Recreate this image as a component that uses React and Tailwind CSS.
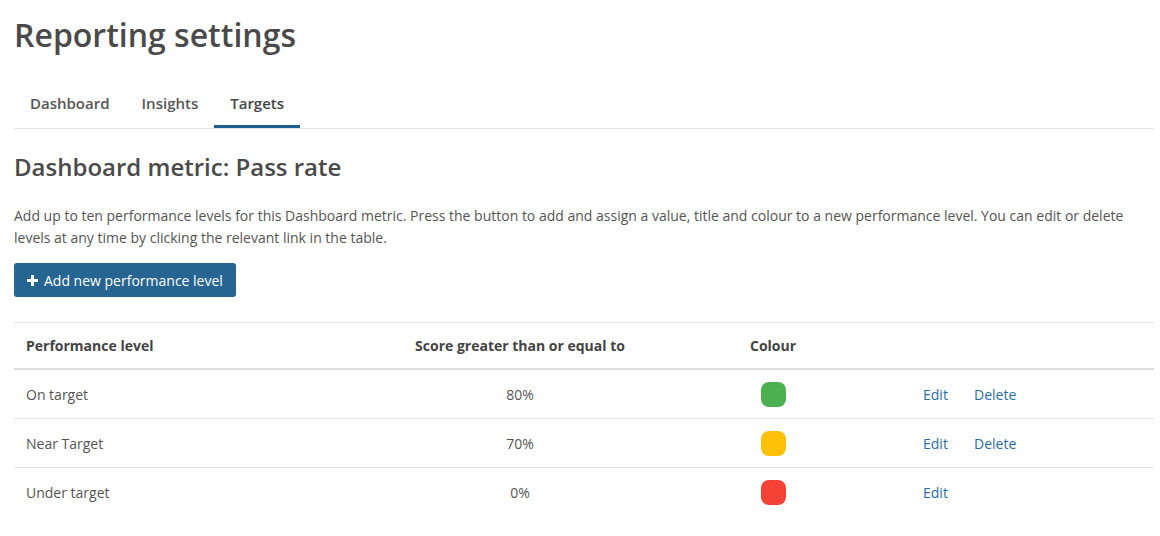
import React, { useState } from "react";

const levels = [
  { id: 1, name: "On target", score: "80%", colour: "bg-[#4caf50]", canDelete: true },
  { id: 2, name: "Near Target", score: "70%", colour: "bg-[#ffc107]", canDelete: true },
  { id: 3, name: "Under target", score: "0%", colour: "bg-[#f44336]", canDelete: false },
];

const tabs = ["Dashboard", "Insights", "Targets"];

const PlusIcon = () => (
  <svg width="11" height="11" viewBox="0 0 11 11" className="shrink-0">
    <path d="M4 0h3v4h4v3H7v4H4V7H0V4h4z" fill="currentColor" />
  </svg>
);

const App = () => {
  const [activeTab, setActiveTab] = useState("Targets");

  return (
    <div
      className="min-h-[536px] bg-white pl-[14px] pr-[6px] text-[#555]"
      style={{ fontFamily: '"Open Sans", "Liberation Sans", sans-serif' }}
    >
      <h1 className="pt-[13px] text-[32px] leading-[44px] font-semibold text-[#4a4a4a]">
        Reporting settings
      </h1>

      <div className="mt-[33px] flex border-b border-[#e3e3e3]">
        {tabs.map((tab) => (
          <button
            key={tab}
            onClick={() => setActiveTab(tab)}
            className={`flex h-[38px] items-start border-b-[3px] px-[16px] pt-[3px] text-[15px] font-semibold leading-[20px] ${
              activeTab === tab ? "border-[#1f5f8f] text-[#444]" : "border-transparent text-[#555]"
            }`}
          >
            {tab}
          </button>
        ))}
      </div>

      <h2 className="mt-[22px] text-[24px] leading-[32px] font-semibold text-[#4a4a4a]">
        Dashboard metric: Pass rate
      </h2>

      <p className="mt-[22px] text-[14px] leading-[22px] text-[#555]">
        Add up to ten performance levels for this Dashboard metric. Press the button to add and assign a value,
        title and colour to a new performance level. You can edit or delete levels at any time by clicking the
        relevant link in the table.
      </p>

      <button className="mt-[14px] flex h-[34px] w-[222px] items-center gap-[6px] whitespace-nowrap rounded-[3px] bg-[#266591] px-[13px] text-[14px] font-medium text-white">
        <PlusIcon />
        Add new performance level
      </button>

      <div className="mt-[25px] border-t border-[#e3e3e3]">
        <div className="grid h-[47px] grid-cols-[286px_440px_171px_1fr] items-center border-b-2 border-[#dedede] text-[14px] font-bold text-[#444]">
          <div className="pl-[12px]">Performance level</div>
          <div className="text-center">Score greater than or equal to</div>
          <div className="pl-[10px]">Colour</div>
          <div />
        </div>
        {levels.map((level) => (
          <div
            key={level.id}
            className="grid h-[49px] grid-cols-[286px_440px_171px_1fr] items-center border-b border-[#e3e3e3] text-[14px] text-[#555] last:border-b-0"
          >
            <div className="pl-[12px]">{level.name}</div>
            <div className="text-center">{level.score}</div>
            <div className="pl-[21px]">
              <div className={`h-[25px] w-[25px] rounded-[8px] ${level.colour}`} />
            </div>
            <div className="flex gap-[26px] pl-[12px] text-[#2a6ea6]">
              <a href="#" className="w-[25px]">Edit</a>
              {level.canDelete && <a href="#">Delete</a>}
            </div>
          </div>
        ))}
      </div>
    </div>
  );
};

export default App;
